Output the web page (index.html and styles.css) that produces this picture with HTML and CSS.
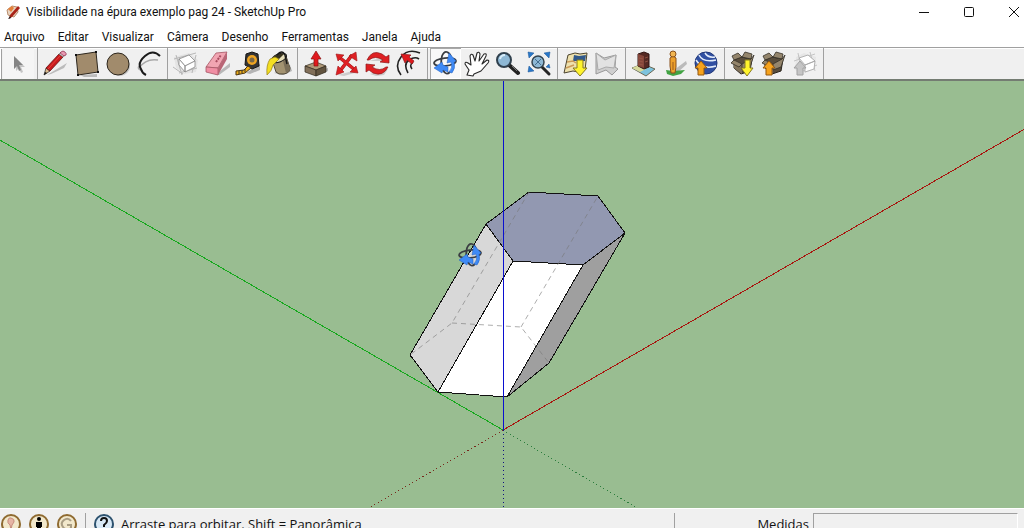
FILE: index.html
```html
<!DOCTYPE html>
<html lang="pt-BR">
<head>
  <meta charset="UTF-8" />
  <meta name="viewport" content="width=device-width, initial-scale=1" />
  <title>Visibilidade na épura exemplo pag 24 - SketchUp Pro</title>
  <link rel="stylesheet" href="styles.css">
</head>
<body>
<div class="app">
  <header class="titlebar">
    <svg class="app-icon" viewBox="0 0 16 16" aria-hidden="true">
      <path d="M2 6l5-4 5 1 1 5-4 5-6-2z" fill="#e8d3c0" stroke="#b98d6c"/>
      <path d="M3 5l4-3 2 2-3 4z" fill="#e5813a"/>
      <path d="M13 2l2 2-8 9-3 2 1-4z" fill="#a92318"/>
      <path d="M5 12l-2 3 3-1z" fill="#222"/>
    </svg>
    <h1 class="title">Visibilidade na épura exemplo pag 24 - SketchUp Pro</h1>
    <div class="window-buttons">
      <button aria-label="Minimizar"><svg viewBox="0 0 12 12"><path d="M1 6.500h10"/></svg></button>
      <button aria-label="Maximizar"><svg viewBox="0 0 12 12"><rect x="1.500" y="1.500" width="9" height="9" rx="1"/></svg></button>
      <button aria-label="Fechar"><svg viewBox="0 0 12 12"><path d="M1 1l10 10M11 1L1 11"/></svg></button>
    </div>
  </header>

  <nav class="menubar" aria-label="Menu principal">
    <button>Arquivo</button>
    <button>Editar</button>
    <button>Visualizar</button>
    <button>Câmera</button>
    <button>Desenho</button>
    <button>Ferramentas</button>
    <button>Janela</button>
    <button>Ajuda</button>
  </nav>

  <div class="toolbar" role="toolbar" aria-label="Ferramentas">
    <div class="group">
      <button class="tool selectable" aria-label="Selecionar">
        <svg viewBox="0 0 31 31"><path d="M13 10v13l3-3 2 5 2-1-2-5h4z" fill="#c4c4c4"/><path d="M11 8v13l3-3 2 5 2-1-2-5h4z" fill="#858585"/></svg>
      </button>
    </div>
    <div class="group">
      <button class="tool" aria-label="Linha">
        <svg viewBox="0 0 31 31"><path d="M7 27l20-12-3 5-13 6z" fill="#bbb"/><path d="M4 27l2-7 4 3z" fill="#d9b98d" stroke="#222" stroke-width=".7"/><path d="M4 27l1-3 2 1z" fill="#111"/><path d="M6 20L19 6l4 3-13 14z" fill="#c91a1d" stroke="#641010" stroke-width=".8"/><path d="M8 21L20 8" stroke="#e8423a"/><path d="M19 6l2-2 4 3-2 2z" fill="#ddd" stroke="#666" stroke-width=".6"/><path d="M21 4q2-2 4 0t1 3l-2 1-4-3z" fill="#e99ab2" stroke="#713" stroke-width=".6"/></svg>
      </button>
      <button class="tool" aria-label="Retângulo">
        <svg viewBox="0 0 31 31"><path d="M9 27l17-1v3H13z" fill="#bbb"/><path d="M5 7l20-3 2 20-20 3z" fill="#a18b6c" stroke="#2c261d"/><path d="M4 6h2v2H4zM24 3h2v2h-2zM26 23h2v2h-2zM6 26h2v2H6z" fill="#111"/></svg>
      </button>
      <button class="tool" aria-label="Círculo">
        <svg viewBox="0 0 31 31"><ellipse cx="18" cy="18" rx="10" ry="10" fill="#c3c3c3"/><circle cx="16" cy="16" r="11" fill="#a18b6c" stroke="#2c261d"/></svg>
      </button>
      <button class="tool" aria-label="Arco">
        <svg viewBox="0 0 31 31" fill="none"><path d="M6 20Q13 10 25 12M8 22q-4-1-2-4" stroke="#a8a8a8" stroke-width="1.500"/><path d="M27 8Q20 1 12 8T8 21q1 4 5 6" stroke="#1a1a1a" stroke-width="2"/></svg>
      </button>
    </div>
    <div class="group">
      <button class="tool" aria-label="Criar componente">
        <svg viewBox="0 0 31 31"><path d="M4 9l15-4 9 7-2 12-12 2-8-6z" fill="#e4e4e4"/><path d="M6 7l6 20M4 11l22-6M9 25l18-5M26 7l-4 18M3 19l10 7" stroke="#b8b8b8" fill="none"/><path d="M9 11l10-4 6 6-10 5z" fill="#fff" stroke="#888" stroke-width=".8"/><path d="M9 11l6 7v6l-6-7zM15 18l10-5v6l-10 5z" fill="#fff" stroke="#888" stroke-width=".8"/></svg>
      </button>
      <button class="tool" aria-label="Borracha">
        <svg viewBox="0 0 31 31"><path d="M14 27L29 15v4l-11 8z" fill="#b8b8b8"/><path d="M5 19L15 5l11-1-9 16z" fill="#f1a5b2" stroke="#a65765" stroke-width=".8"/><path d="M5 19l12 1v7L5 24z" fill="#f08fa4" stroke="#a65765" stroke-width=".8"/><path d="M17 20l9-16v7l-9 16z" fill="#b96676"/><path d="M15 14l5-7" stroke="#a94d60" stroke-width="2" stroke-dasharray="2 1"/></svg>
      </button>
      <button class="tool" aria-label="Trena">
        <svg viewBox="0 0 31 31"><path d="M14 25l14-9v6l-10 4z" fill="#b4b4b4"/><path d="M14 6l6-2 6 2 1 12-7 3-7-4z" fill="#343434" stroke="#151515"/><circle cx="20" cy="12" r="5" fill="#eea421"/><circle cx="20" cy="12" r="2.500" fill="#776748"/><path d="M16 18l-4 4-8 1v4l9-2 6-5z" fill="#f0ae17" stroke="#4a3511"/><path d="M7 23v3M10 22v3M13 21v3" stroke="#333"/></svg>
      </button>
      <button class="tool" aria-label="Balde de pintura">
        <svg viewBox="0 0 31 31"><path d="M11 25l16-8 2 6-9 4z" fill="#b8b8b8"/><path d="M9 12L23 8l4 12q0 5-6 6t-8-2z" fill="#a39371" stroke="#342d21" stroke-width=".8"/><path d="M19 9l4-1 4 12q0 4-4 5z" fill="#7a6e58"/><ellipse cx="16" cy="10" rx="8" ry="4" transform="rotate(-22 16 10)" fill="#e5ddb9" stroke="#161616"/><path d="M10 10q3-5 11-4l-6 6z" fill="#38331f"/><path d="M7 11q-4 6-3 16 5-4 6-10l6-6-4-2z" fill="#f4df22" stroke="#948019" stroke-width=".7"/><path d="M14 7q5-6 8 0l2 9" fill="none" stroke="#171717" stroke-width="1.500"/></svg>
      </button>
    </div>
    <div class="group">
      <button class="tool" aria-label="Empurrar/Puxar">
        <svg viewBox="0 0 31 31"><path d="M10 25l18-5v3l-12 5z" fill="#b7b7b7"/><path d="M5 18l11-4 10 4-10 4z" fill="#af9978" stroke="#30291d" stroke-width=".7"/><path d="M5 18l11 4v6L5 24z" fill="#82705a" stroke="#30291d" stroke-width=".7"/><path d="M16 22l10-4v6l-10 4z" fill="#625440" stroke="#30291d" stroke-width=".7"/><path d="M14 18v-7h-3l5-8 5 8h-3v7z" fill="#e0191d" stroke="#811" stroke-width=".7"/></svg>
      </button>
      <button class="tool" aria-label="Mover">
        <svg viewBox="0 0 31 31"><path d="M7 27l18-5 2 2-14 4z" fill="#ccc"/><path d="M8 9l16 13M21 7L9 23" stroke="#9c1719" stroke-width="3.500"/><path d="M8 9l16 13M21 7L9 23" stroke="#df2023" stroke-width="2.500"/><path d="M5 6l8 1-6 6zM25 4l1 9-8-5zM27 25l-8-1 6-6zM5 27l2-9 6 6z" fill="#df2023" stroke="#9c1719" stroke-width=".6"/></svg>
      </button>
      <button class="tool" aria-label="Girar">
        <svg viewBox="0 0 31 31"><path d="M8 26l18-5-4 6-8 1zM7 13l16-4v4z" fill="#ccc"/><path d="M5 12Q10 1 20 6l4 3 3-2v8l-9-1 3-2q-8-5-14 0z" fill="#df2023" stroke="#8c1719" stroke-width=".7"/><path d="M26 19q-5 10-15 6l-4-3-3 2v-8l9 1-3 2q8 5 14 0z" fill="#df2023" stroke="#8c1719" stroke-width=".7"/></svg>
      </button>
      <button class="tool" aria-label="Equidistância">
        <svg viewBox="0 0 31 31"><path d="M8 27Q1 18 8 9T27 5M15 25q-5-9 1-13t10-1M19 21q-3-4 1-7" fill="none" stroke="#222" stroke-width="1.600"/><path d="M19 16l-5-4-2 3-4-9 10 1-2 2 5 4z" fill="#e0191d" stroke="#8c1719" stroke-width=".7"/></svg>
      </button>
    </div>
    <div class="group">
      <button class="tool active" aria-label="Orbitar" aria-pressed="true">
        <svg viewBox="0 0 31 31"><use href="#orbit"/></svg>
      </button>
      <button class="tool" aria-label="Panorâmica">
        <svg viewBox="0 0 31 31"><path d="M6 27l2-5-4-6q0-3 3-1l3 2-1-9q1-3 3-1l2 6 2-8q2-2 3 1l-1 7 5-7q3-1 2 2l-4 8 5-4q3 0 1 3l-7 8-7 3-1 2z" fill="#fff" stroke="#272727" stroke-width="1.100" stroke-linejoin="round"/></svg>
      </button>
      <button class="tool" aria-label="Zoom">
        <svg viewBox="0 0 31 31"><path d="M17 17l9 8" stroke="#222" stroke-width="4" stroke-linecap="round"/><path d="M20 18l5 5" stroke="#777"/><circle cx="12" cy="12" r="7" fill="#8eb8d5" stroke="#30404d" stroke-width="2"/><path d="M8 11q1-4 5-4" fill="none" stroke="#d8edf9" stroke-width="2"/></svg>
      </button>
      <button class="tool" aria-label="Modelo centralizado">
        <svg viewBox="0 0 31 31"><path d="M19 19l7 7" stroke="#252525" stroke-width="3" stroke-linecap="round"/><circle cx="15" cy="14" r="6" fill="#8eb8d5" stroke="#34444f" stroke-width="1.500"/><path d="M12 11l6 6M18 11l-6 6" stroke="#466f91"/><path d="M5 4l6 1-5 5zM27 4l-6 1 5 5zM5 24l6-1-5-5zM27 20l-4-1 3-3z" fill="#2877c8" stroke="#195395" stroke-width=".5"/></svg>
      </button>
    </div>
    <div class="group">
      <button class="tool" aria-label="Adicionar local">
        <svg viewBox="0 0 31 31"><path d="M8 7l7-2 5 1 7-1-2 17-7 2-5-1-9 2z" fill="#eee1ad" stroke="#4c442e"/><path d="M14 7l5 1 7-1-1 6H13z" fill="#30588a"/><path d="M7 14l6-1 3 2M6 20l8-3" fill="none" stroke="#cb9a58" stroke-width="1.500"/><path d="M17 12h6v8h4l-7 8-7-8h4z" fill="#fff42d" stroke="#867a23"/></svg>
      </button>
      <button class="tool" aria-label="Alternar terreno">
        <svg viewBox="0 0 31 31"><path d="M5 5l8 5 12-3-1 12 3 2-6 6-6-5-10 4z" fill="#cfcfcf" stroke="#999"/><path d="M5 5l9 7 11-5-2 13-8-1-8 3z" fill="#e2e2e2" stroke="#aaa"/></svg>
      </button>
    </div>
    <div class="group">
      <button class="tool" aria-label="Criar edifício">
        <svg viewBox="0 0 31 31"><path d="M4 20l11-4 12 5-9 7z" fill="#7dc3dd" stroke="#6d6a56"/><path d="M4 20l7-3 7 4-6 3z" fill="#d7d99a"/><path d="M10 6l6-2 5 2v13l-5 2-6-3z" fill="#552923" stroke="#321714"/><path d="M10 6l6 2v12l-6-2z" fill="#86463a"/><path d="M11 10l4 1M11 13l4 1M11 16l4 1M17 10l3-1M17 14l3-1" stroke="#9c5947" stroke-width=".8"/></svg>
      </button>
      <button class="tool" aria-label="Street View">
        <svg viewBox="0 0 31 31"><path d="M15 22l12-9 1 3-10 9z" fill="#bbb"/><path d="M7 22l7 1 12-1-4 4-8 2-6-2z" fill="#42a343"/><path d="M11 10l3-2 3 2v9l-1 6h-4l-1-7z" fill="#eea12c" stroke="#89511c"/><path d="M14 14v8" stroke="#9d5d1e"/><circle cx="14" cy="6" r="3" fill="#f2b550" stroke="#89511c"/></svg>
      </button>
      <button class="tool" aria-label="Visualizar no Google Earth">
        <svg viewBox="0 0 31 31"><circle cx="16" cy="15" r="11" fill="#3150a2" stroke="#203777"/><path d="M9 7q4 8 17 5M15 5q3 5 10 4M6 12q6 10 20 6" stroke="#e4edfa" stroke-width="1.500" fill="none"/><path d="M8 27v-7H5l6-7 6 7h-3v7z" fill="#f6a31d" stroke="#935811"/></svg>
      </button>
    </div>
    <div class="group">
      <button class="tool" aria-label="Obter modelos">
        <svg viewBox="0 0 31 31"><use href="#box"/><path d="M18 12h5v8h3l-6 8-6-8h4z" fill="#fff42d" stroke="#867a23"/></svg>
      </button>
      <button class="tool" aria-label="Compartilhar modelo">
        <svg viewBox="0 0 31 31"><use href="#box"/><path d="M8 27v-7H5l6-7 6 7h-3v7z" fill="#f6a31d" stroke="#935811"/></svg>
      </button>
      <button class="tool" aria-label="Compartilhar componente">
        <svg viewBox="0 0 31 31"><path d="M7 9l8-4 12 4-1 12-12 5-8-4z" fill="#e6e6e6"/><path d="M9 5l4 20M5 13l21-7M9 25l19-8M21 4l5 19" stroke="#c4c4c4"/><path d="M10 10l9-3 7 6-10 4zM16 17l10-4-1 8-9 3z" fill="#fff" stroke="#a2a2a2" stroke-width=".8"/><path d="M8 27v-7H5l6-7 6 7h-3v7z" fill="#c5c5c5" stroke="#a2a2a2"/></svg>
      </button>
    </div>
  </div>

  <main class="viewport">
    <svg class="scene" viewBox="0 81 1024 427" preserveAspectRatio="xMidYMid slice" role="img" aria-label="Prisma hexagonal oblíquo com os eixos do modelo">
      <defs>
        <g id="orbit">
          <ellipse cx="15" cy="14" rx="11" ry="4" transform="rotate(-6 15 14)" fill="none" stroke="#3a3d42" stroke-width="1.800"/>
          <path d="M20 24q-4 4-7-2T12 8q2-5 5-4t4 5" fill="none" stroke="#3a3d42" stroke-width="1.800"/>
          <path d="M19 5l7 8-2 1q2 6-2 11l-3-1q4-4 2-10l-4 1z" fill="#3f8af5" stroke="#1f5fc0" stroke-width=".5"/>
          <path d="M4 20l8-6 1 3 5 2v5l-5-2-1 3z" fill="#3f8af5" stroke="#1f5fc0" stroke-width=".5"/>
        </g>
        <g id="box">
          <path d="M7 12l7-3 11 2-2 12-9 3-7-6z" fill="#594d3c" stroke="#29241d"/>
          <path d="M7 12l8 4v10l-8-6z" fill="#82735b"/>
          <path d="M7 12L5 8l6-3 4 4zM15 9l3-5 7 2-1 5zM15 16l9-5 3-4-4 12-8 3zM7 12l8 4-3 3-8-4z" fill="#94856c" stroke="#353027" stroke-width=".8"/>
        </g>
      </defs>

      <!-- negative half of each axis -->
      <g class="axis dotted">
        <path class="red" d="M503 430L371 507"/>
        <path class="green" d="M503 430L636 507"/>
        <path class="blue" d="M503.500 430V508"/>
      </g>
      <g class="axis">
        <path class="green" d="M-500 -148L503 430"/>
        <path class="red" d="M503 430L1524 -159"/>
      </g>

      <g class="prism">
        <path class="face-left" d="M486 224L513 261L438 392L410 355Z"/>
        <path class="face-front" d="M513 261L583 265L507 397L438 392Z"/>
        <path class="face-right" d="M583 265L625 233L549 363L507 397Z"/>
        <path class="face-top" d="M486 224L529 192L598 196L625 233L583 265L513 261Z"/>
      </g>
      <path class="hidden-edges" d="M529 192L452 323L410 355M452 323L521 327L549 363M521 327L598 196"/>
      <path class="axis blue" d="M503.500 -400V430"/>

      <g transform="translate(455 240)">
        <use href="#orbit"/>
      </g>
    </svg>
  </main>

  <footer class="statusbar">
    <div class="status-row">
      <div class="status-icons">
        <button aria-label="Localização geográfica"><svg viewBox="0 0 22 22"><circle class="ring" cx="11" cy="11" r="9"/><path d="M11 17l-1-5q-3-2-2-5t3-2q4 1 3 4l-2 3z" fill="#e6b5a5" stroke="#c58d7d"/></svg></button>
        <button aria-label="Créditos"><svg viewBox="0 0 22 22"><circle class="ring" cx="11" cy="11" r="9"/><circle cx="11" cy="6" r="2"/><path d="M8 9h6v5h-1v5H9v-5H8z"/></svg></button>
        <button aria-label="Google"><svg viewBox="0 0 22 22"><circle class="ring" cx="11" cy="11" r="9"/><path d="M15 8q-3-4-7-1t-1 7 8 1v-3h-4" fill="none" stroke="#a99d83" stroke-width="2"/></svg></button>
      </div>
      <button class="help" aria-label="Ajuda"><svg viewBox="0 0 22 22"><circle cx="11" cy="11" r="9" fill="#d9e9f6" stroke="#2d526f" stroke-width="2"/><path d="M8 8q0-3 3-3t3 3q0 2-3 4v2" fill="none" stroke="#111" stroke-width="2"/><path d="M10 16h2v2h-2z"/></svg></button>
      <p class="hint">Arraste para orbitar. Shift = Panorâmica</p>
      <div class="measure">
        <label for="medidas">Medidas</label>
        <input id="medidas" type="text">
      </div>
    </div>
  </footer>
</div>
</body>
</html>
```
FILE: styles.css
```css
* {
  box-sizing: border-box;
}
html, body {
  margin: 0;
  padding: 0;
  height: 100%;
}
body {
  overflow: hidden;
  background: #fff;
  color: #111;
  font-family: Roboto, "Noto Sans", sans-serif;
  font-size: 12px;
}
button {
  margin: 0;
  padding: 0;
  border: 0;
  background: none;
  color: inherit;
  font: inherit;
}
svg {
  display: block;
}
.app {
  display: flex;
  flex-direction: column;
  height: 100vh;
}

/* title bar */
.titlebar {
  display: flex;
  align-items: center;
  flex: none;
  height: 24px;
  padding-left: 5px;
}
.app-icon {
  width: 16px;
  height: 16px;
  margin-right: 5px;
}
.title {
  flex: 1;
  margin: 0;
  font-size: 12px;
  font-weight: normal;
  white-space: nowrap;
}
.window-buttons {
  display: flex;
  gap: 33px;
  padding-right: 4px;
}
.window-buttons svg {
  width: 12px;
  height: 12px;
  fill: none;
  stroke: #111;
}

/* menu */
.menubar {
  display: flex;
  align-items: center;
  flex: none;
  gap: 13px;
  height: 23px;
  padding: 2px 4px 0;
}

/* toolbar */
.toolbar {
  display: flex;
  flex: none;
  height: 34px;
  padding-left: 3px;
  background: #f0f0f0;
  border-top: 1px solid #a0a0a0;
  border-bottom: 2px solid #747c72;
  box-shadow: inset 0 1px #fff, inset 1px 0 #fff, inset 2px 0 #a0a0a0;
}
.group {
  display: flex;
  padding-right: 3px;
  margin-right: 2px;
  border-right: 1px solid #a0a0a0;
}
.tool {
  width: 31px;
  height: 31px;
}
.tool svg {
  width: 31px;
  height: 31px;
}
.tool.selectable {
  background: #f5f5f5;
}
.tool.active {
  background: #f8f8f8;
  box-shadow: inset 1px 1px #a8a8a8, inset -1px -1px #fff;
}

/* drawing area */
.viewport {
  flex: 1;
  min-height: 0;
  background: #99bd91;
}
.scene {
  width: 100%;
  height: 100%;
}
.axis {
  fill: none;
  shape-rendering: crispEdges;
}
.red {
  stroke: #a8150f;
}
.green {
  stroke: #16a81d;
}
.blue {
  stroke: #0a10d0;
}
.dotted {
  stroke-dasharray: 1 3;
}
.dotted .red {
  stroke: #762a1c;
}
.dotted .green {
  stroke: #2c7d3d;
}
.dotted .blue {
  stroke: #101080;
}
.prism {
  stroke: #111;
  stroke-linejoin: round;
  shape-rendering: crispEdges;
}
.face-left {
  fill: #d8d8d8;
}
.face-front {
  fill: #fff;
}
.face-right {
  fill: #9f9f9f;
}
.face-top {
  fill: #9298b1;
}
.hidden-edges {
  fill: none;
  stroke: #777;
  stroke-opacity: .6;
  stroke-dasharray: 5 4;
}

/* status bar */
.statusbar {
  flex: none;
  height: 20px;
  overflow: hidden;
  background: #f0f0f0;
  border-top: 1px solid #fff;
  font-family: "Open Sans", "Noto Sans", sans-serif;
  font-size: 13px;
}
.status-row {
  display: flex;
  align-items: center;
  height: 30px;
}
.status-icons {
  display: flex;
  gap: 6px;
  height: 22px;
  align-items: center;
  padding-right: 7px;
  border-right: 1px solid #a0a0a0;
}
.status-icons svg, .help svg {
  width: 22px;
  height: 22px;
}
.ring {
  fill: #f2e8cb;
  stroke: #8f6b31;
  stroke-width: 2;
}
.help {
  margin: 0 6px 0 7px;
}
.hint {
  flex: 1;
  margin: 0;
  line-height: 18px;
  white-space: nowrap;
}
.measure {
  display: flex;
  align-items: center;
  justify-content: flex-end;
  gap: 4px;
  flex: 0 0 350px;
  height: 22px;
  padding-right: 6px;
  border-left: 1px solid #a0a0a0;
}
.measure label {
  line-height: 18px;
}
.measure input {
  width: 205px;
  height: 22px;
  padding: 0 4px;
  border: 1px solid #a0a0a0;
  border-right-color: #fff;
  background: #f0f0f0;
  font: inherit;
}
```
